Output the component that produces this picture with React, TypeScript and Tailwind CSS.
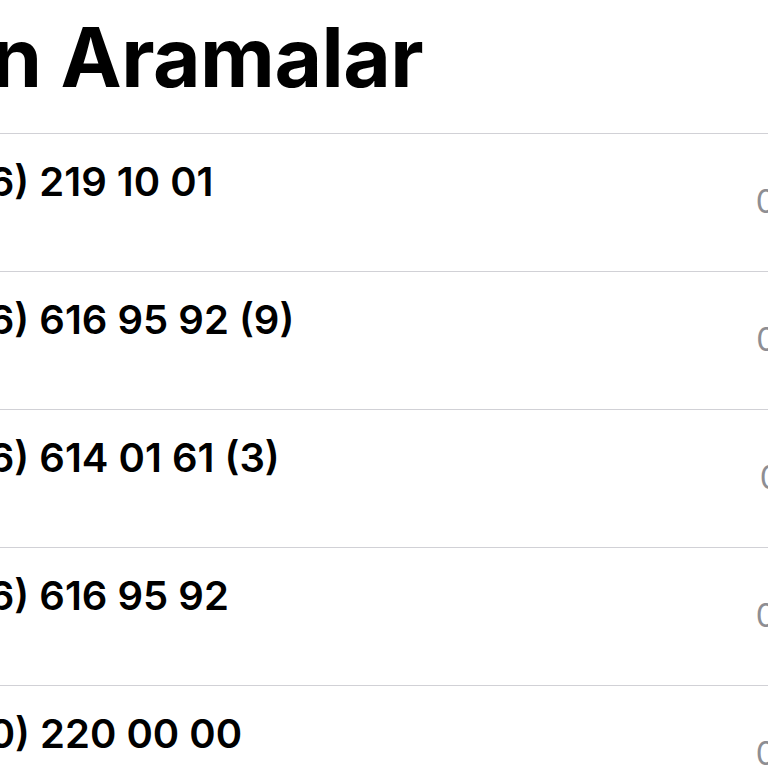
const CALLS = [
  { number: "+90 (216) 219 10 01", label: "Türkiye", time: "09:41" },
  { number: "+90 (216) 616 95 92 (9)", label: "Türkiye", time: "08:12" },
  { number: "+90 (216) 614 01 61 (3)", label: "Türkiye", time: "07:15" },
  { number: "+90 (216) 616 95 92", label: "Türkiye", time: "06:41" },
  { number: "+90 (210) 220 00 00", label: "Türkiye", time: "00:31" },
];

export default function App() {
  return (
    <div className="w-[768px] h-[768px] overflow-hidden bg-white font-['Inter','Liberation_Sans',sans-serif] text-black">
      {/* the screenshot is zoomed in, so the left and right edges are cut */}
      <div className="-ml-[180px] w-[1100px]">
        <div className="pl-[68px] pt-[17px] pb-[31px] h-[133px]">
          <h1 className="text-[82px] leading-none font-bold tracking-[-0.5px]">
            Son Aramalar
          </h1>
        </div>
        <div className="border-t border-[#d1d1d6]">
          {CALLS.map((call, i) => (
            <div
              key={i}
              className="flex h-[138px] border-b border-[#d1d1d6] pl-[23px] pr-[82px]"
            >
              <div className="flex-1 pt-[28px]">
                <div className="text-[40px] leading-none font-semibold">
                  {call.number}
                </div>
                <div className="mt-[8px] text-[28px] leading-none text-[#8e8e93]">
                  {call.label}
                </div>
              </div>
              <div className="pt-[52px] text-[32px] leading-none text-[#8e8e93]">
                {call.time}
              </div>
            </div>
          ))}
        </div>
      </div>
    </div>
  );
}
